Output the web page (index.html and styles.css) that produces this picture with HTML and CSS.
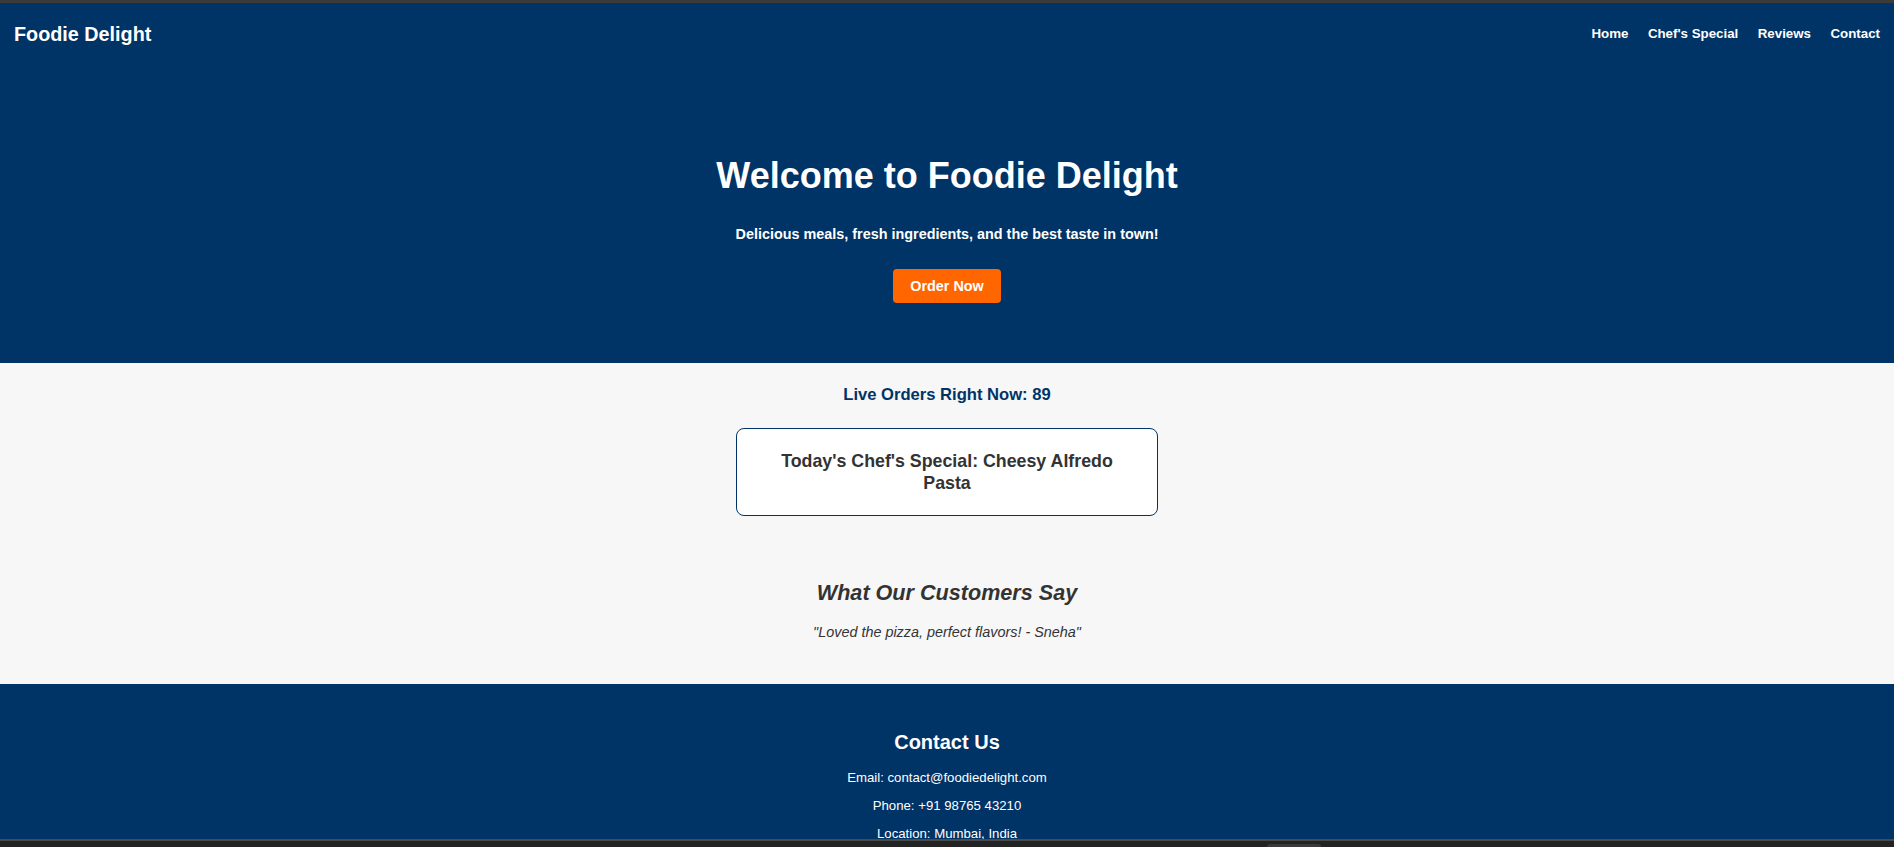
FILE: index.html
```html
<!DOCTYPE html>
<html lang="en">
<head>
<meta charset="UTF-8">
<title>Foodie Delight</title>
<link rel="stylesheet" href="styles.css">
</head>
<body>
<div class="window-top"></div>
<header class="site-header">
  <div class="logo">Foodie Delight</div>
  <nav class="main-nav">
    <a href="#home">Home</a>
    <a href="#special">Chef's Special</a>
    <a href="#reviews">Reviews</a>
    <a href="#contact">Contact</a>
  </nav>
</header>
<section class="hero" id="home">
  <h1>Welcome to Foodie Delight</h1>
  <p>Delicious meals, fresh ingredients, and the best taste in town!</p>
  <a class="btn-order" href="#special">Order Now</a>
</section>
<main class="content">
  <h3 class="live-orders">Live Orders Right Now: <span>89</span></h3>
  <div class="special-card" id="special">
    <h2>Today's Chef's Special: Cheesy Alfredo Pasta</h2>
  </div>
  <section class="reviews" id="reviews">
    <h2>What Our Customers Say</h2>
    <p>"Loved the pizza, perfect flavors! - Sneha"</p>
  </section>
</main>
<footer class="site-footer" id="contact">
  <h2>Contact Us</h2>
  <p>Email: contact@foodiedelight.com</p>
  <p>Phone: +91 98765 43210</p>
  <p>Location: Mumbai, India</p>
</footer>
<div class="window-bottom"><span class="window-tab"></span></div>
</body>
</html>
```

FILE: styles.css
```css
* {
  box-sizing: border-box;
}

html, body {
  margin: 0;
  padding: 0;
}

body {
  font-family: "Liberation Sans", Arial, sans-serif;
  background: #f7f7f7;
  color: #333333;
}

.window-top {
  height: 3px;
  background: #3b3b3b;
}

.site-header {
  height: 62px;
  background: #003366;
  display: flex;
  align-items: center;
  justify-content: space-between;
  padding: 0 14px;
}

.logo {
  color: #ffffff;
  font-weight: bold;
  font-size: 19.8px;
  line-height: 23px;
}

.main-nav {
  display: flex;
  gap: 19.5px;
}

.main-nav a {
  color: #ffffff;
  font-weight: bold;
  font-size: 13.3px;
  line-height: 16px;
  text-decoration: none;
}

.hero {
  background: #003366;
  color: #ffffff;
  display: flex;
  flex-direction: column;
  align-items: center;
  text-align: center;
  padding: 90px 20px 60px;
}

.hero h1 {
  margin: 0;
  font-size: 36px;
  line-height: 41px;
  font-weight: bold;
}

.hero p {
  margin: 30px 0 0;
  font-size: 14.4px;
  line-height: 17px;
  font-weight: bold;
}

.btn-order {
  margin-top: 26px;
  display: inline-block;
  background: #ff6600;
  color: #ffffff;
  font-size: 14.4px;
  font-weight: bold;
  line-height: 17px;
  padding: 8.5px 17.5px;
  border-radius: 4px;
  text-decoration: none;
}

.content {
  display: flex;
  flex-direction: column;
  align-items: center;
  text-align: center;
  padding: 22px 20px 43.5px;
  background: #f7f7f7;
}

.live-orders {
  margin: 0;
  color: #003366;
  font-size: 16.6px;
  line-height: 19px;
  font-weight: bold;
}

.special-card {
  margin-top: 24px;
  width: 422px;
  background: #ffffff;
  border: 1px solid #003366;
  border-radius: 8px;
  padding: 21px 30px;
}

.special-card h2 {
  margin: 0;
  font-size: 17.8px;
  line-height: 22px;
  font-weight: bold;
  color: #333333;
}

.reviews {
  display: flex;
  flex-direction: column;
  align-items: center;
}

.reviews h2 {
  margin: 64px 0 0;
  font-size: 21.6px;
  line-height: 25px;
  font-weight: bold;
  font-style: italic;
  color: #333333;
}

.reviews p {
  margin: 18.5px 0 0;
  font-size: 14.4px;
  line-height: 17px;
  font-style: italic;
  color: #333333;
}

.site-footer {
  background: #003366;
  color: #ffffff;
  display: flex;
  flex-direction: column;
  align-items: center;
  text-align: center;
  padding: 47px 20px 30px;
}

.site-footer h2 {
  margin: 0 0 3px;
  font-size: 20px;
  line-height: 23px;
  font-weight: bold;
}

.site-footer p {
  margin: 13px 0 0;
  font-size: 13.2px;
  line-height: 15px;
}

.window-bottom {
  position: fixed;
  left: 0;
  right: 0;
  bottom: 0;
  height: 8px;
  background: #232323;
  border-top: 2px solid #4a4a4a;
}

.window-tab {
  position: absolute;
  left: 1267px;
  bottom: 0;
  width: 54px;
  height: 3px;
  background: #3a3a3a;
  border-radius: 3px 3px 0 0;
}
```
